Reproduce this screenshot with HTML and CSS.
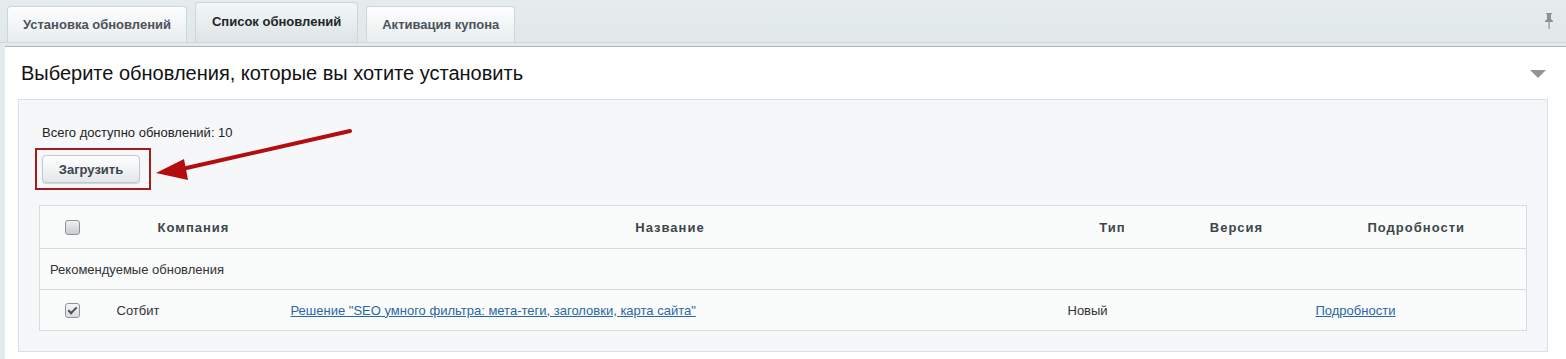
FILE: index.html
```html
<!DOCTYPE html>
<html lang="ru">
<head>
    <meta charset="UTF-8">
    <title>Обновление системы</title>
    <link rel="stylesheet" href="styles.css">
</head>
<body>
    <div class="tabs-bar">
        <div class="tab">Установка обновлений</div>
        <div class="tab tab-active">Список обновлений</div>
        <div class="tab">Активация купона</div>
        <span class="pin" title="Закрепить">
            <svg width="12" height="18" viewBox="0 0 12 18">
                <path d="M3 1h6v1H8v5l2 2v1H2V9l2-2V2H3z" fill="#8b9194"/>
                <rect x="5.5" y="10" width="1.2" height="7" fill="#8b9194"/>
            </svg>
        </span>
    </div>
    <div class="panel">
        <div class="panel-head">
            <h1 class="panel-title">Выберите обновления, которые вы хотите установить</h1>
            <span class="collapse-arrow"></span>
        </div>
        <div class="box">
            <div class="total">Всего доступно обновлений: 10</div>
            <div class="highlight">
                <button class="btn" type="button">Загрузить</button>
            </div>
            <svg class="pointer" width="220" height="60" viewBox="0 0 220 60">
                <path d="M196 5 L28 43" stroke="#b40d0d" stroke-width="4" stroke-linecap="round"/>
                <path d="M2 47 L30 33 L34 54 Z" fill="#b40d0d"/>
            </svg>
            <table class="updates">
                <colgroup>
                    <col style="width:66px">
                    <col style="width:176px">
                    <col>
                    <col style="width:108px">
                    <col style="width:140px">
                    <col style="width:220px">
                </colgroup>
                <thead>
                    <tr>
                        <th><span class="check"></span></th>
                        <th>Компания</th>
                        <th>Название</th>
                        <th>Тип</th>
                        <th>Версия</th>
                        <th>Подробности</th>
                    </tr>
                </thead>
                <tbody>
                    <tr class="group-row">
                        <td colspan="6">Рекомендуемые обновления</td>
                    </tr>
                    <tr>
                        <td class="cell-check"><span class="check checked"></span></td>
                        <td class="cell-company">Сотбит</td>
                        <td><a href="#">Решение "SEO умного фильтра: мета-теги, заголовки, карта сайта"</a></td>
                        <td>Новый</td>
                        <td></td>
                        <td><a href="#">Подробности</a></td>
                    </tr>
                </tbody>
            </table>
        </div>
    </div>
</body>
</html>
```

FILE: styles.css
```css
html, body {
    margin: 0;
    height: 100%;
    font-family: "Liberation Sans", Arial, sans-serif;
    background: #e4eaec;
    color: #333;
}
.tabs-bar {
    display: flex;
    align-items: flex-end;
    gap: 8px;
    height: 42px;
    padding: 0 7px;
    border-bottom: 1px solid #d3dadc;
    background: linear-gradient(#e6ecee, #e1e8ea);
}
.tab {
    height: 36px;
    line-height: 36px;
    padding: 0 15px;
    font-size: 13px;
    font-weight: bold;
    color: #4a535a;
    background: linear-gradient(#fdfefe, #e8edef);
    border: 1px solid #cfd6d9;
    border-bottom: none;
    border-radius: 4px 4px 0 0;
    box-sizing: border-box;
}
.tab-active {
    height: 40px;
    line-height: 38px;
    padding: 0 16px;
    color: #202629;
    background: linear-gradient(#f4f7f8, #dde4e7);
}
.pin {
    margin-left: auto;
    align-self: center;
    display: flex;
    padding-right: 4px;
}
.panel {
    margin-left: 5px;
    margin-top: 3px;
    background: #fff;
    border-top: 1px solid #aeb6b9;
    padding: 0 18px 0 13px;
    height: 320px;
}
.panel-head {
    display: flex;
    align-items: center;
    justify-content: space-between;
    height: 52px;
}
.panel-title {
    margin: 0;
    padding-left: 3px;
    font-size: 20px;
    font-weight: normal;
    color: #111;
}
.collapse-arrow {
    width: 0;
    height: 0;
    border-left: 8px solid transparent;
    border-right: 8px solid transparent;
    border-top: 8px solid #8f9598;
    margin-right: 2px;
    margin-top: 2px;
}
.box {
    position: relative;
    background: #f5f7f8;
    border: 1px solid #dbe0e2;
    padding: 25px 20px 20px 20px;
}
.total {
    font-size: 13px;
    color: #222;
    padding-left: 3px;
    line-height: 15px;
}
.highlight {
    display: inline-block;
    margin: 8px 0 0 -4px;
    padding: 5px 9px 5px 5px;
    border: 2px solid #a31c1c;
}
.btn {
    display: block;
    width: 98px;
    height: 28px;
    font-family: inherit;
    font-size: 13px;
    font-weight: bold;
    color: #3c454b;
    background: linear-gradient(#ffffff, #e3e8ea);
    border: 1px solid #c3cacd;
    border-radius: 4px;
    box-shadow: 0 1px 1px rgba(0, 0, 0, 0.15);
}
.pointer {
    position: absolute;
    left: 135px;
    top: 26px;
}
.updates {
    width: 100%;
    margin-top: 15px;
    border-collapse: collapse;
    table-layout: fixed;
    background: #fafbfb;
    border: 1px solid #d6dbdd;
    font-size: 13px;
}
.updates th {
    height: 40px;
    font-size: 13px;
    font-weight: bold;
    letter-spacing: 1px;
    color: #3d464c;
    text-align: center;
    border-bottom: 1px solid #d6dbdd;
}
.updates td {
    height: 40px;
    padding: 0 10px 0 9px;
    color: #333;
    border-bottom: 1px solid #d6dbdd;
}
.updates td.cell-company {
    padding-left: 11px;
}
.group-row td {
    padding-left: 10px;
}
.updates td.cell-check {
    text-align: center;
    padding: 0;
}
.updates a {
    color: #2a67a6;
    text-decoration: underline;
}
.check {
    display: inline-block;
    width: 13px;
    height: 13px;
    vertical-align: middle;
    border: 1px solid #8e9599;
    border-radius: 3px;
    background: linear-gradient(#eef0f1, #c9cdcf);
    position: relative;
}
.check.checked {
    background: linear-gradient(#f4f5f6, #d8dbdd);
}
.check.checked::after {
    content: "";
    position: absolute;
    left: 4px;
    top: 1px;
    width: 3px;
    height: 7px;
    border: solid #4a5156;
    border-width: 0 2px 2px 0;
    transform: rotate(45deg);
}
```
